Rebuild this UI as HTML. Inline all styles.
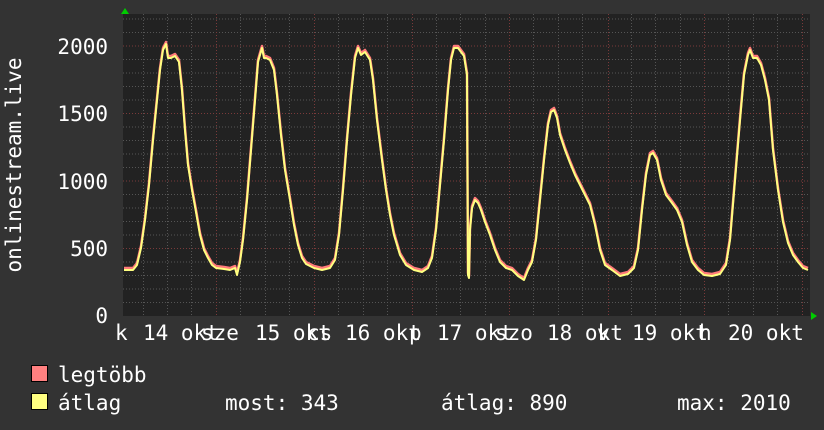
<!DOCTYPE html>
<html><head><meta charset="utf-8"><style>
html,body{margin:0;padding:0;background:#333;width:824px;height:430px;overflow:hidden}
svg{display:block}
text{font-family:"DejaVu Sans Mono","Liberation Mono",monospace;fill:#fff}
</style></head><body>
<svg width="824" height="430" viewBox="0 0 824 430">
<rect x="0" y="0" width="824" height="430" fill="#333"/>
<rect x="123" y="14" width="687" height="302" fill="#222"/>
<g stroke="#555" stroke-width="1" stroke-dasharray="1,2">
<path d="M123 302.5H810M123 289H810M123 275.5H810M123 262H810M123 235H810M123 221.5H810M123 208H810M123 194.5H810M123 167.5H810M123 154H810M123 140.5H810M123 127H810M123 100H810M123 86.5H810M123 73H810M123 59.5H810M123 32.5H810M123 19H810"/>
<path d="M143.5 14V316M167.5 14V316M191.5 14V316M240.5 14V316M265.5 14V316M289.5 14V316M338.5 14V316M363.5 14V316M387.5 14V316M436.5 14V316M460.5 14V316M485.5 14V316M533.5 14V316M558.5 14V316M582.5 14V316M631.5 14V316M655.5 14V316M680.5 14V316M728.5 14V316M753.5 14V316M777.5 14V316"/>
</g>
<g stroke="#7a3a3a" stroke-width="1" stroke-dasharray="1,2">
<path d="M123 248.5H810M123 181H810M123 113.5H810M123 46H810"/>
<path d="M216.5 14V316M314.5 14V316M412.5 14V316M509.5 14V316M608.5 14V316M704.5 14V316M802.5 14V316"/>
</g>
<polygon points="121,14 129,14 125,8" fill="#0c0"/>
<polygon points="811,312 811,320 817,316" fill="#0c0"/>
<g fill="none" stroke-linejoin="round">
<polyline id="c" stroke="#ff7a7a" stroke-width="2.5" transform="translate(0,-2)" points="124,270 133,270 137,265 141,248 145,220 149,185 153,140 157,100 160,70 163,50 166,44 168,58 171,58 175,56 179,62 182,90 185,130 188,165 192,190 196,212 200,235 204,250 208,258 212,265 216,268 224,269 230,270 235,268 237,275 240,262 243,240 247,200 251,150 255,100 258,62 262,48 264,58 266,58 270,60 274,70 277,95 281,135 285,170 290,200 294,225 298,245 302,258 306,264 314,268 322,270 330,268 335,260 339,235 343,190 347,140 351,95 355,58 358,48 361,55 365,52 370,60 373,80 377,120 382,160 386,190 390,215 394,235 400,255 406,265 414,270 422,272 428,268 432,258 436,230 440,185 444,140 448,90 451,60 454,48 458,48 461,52 464,56 467,75 468,275 469,278 470,230 472,208 475,200 478,203 481,210 485,222 490,235 495,250 500,262 506,268 512,270 518,276 524,280 528,270 532,262 536,240 540,200 544,160 548,125 551,112 554,110 557,118 560,135 565,150 570,163 575,175 580,185 585,195 590,205 595,225 600,250 605,265 612,270 620,276 628,274 634,268 638,250 642,210 646,175 650,155 653,153 657,160 661,180 666,195 672,203 677,210 682,222 687,245 692,262 698,270 704,275 712,276 720,274 726,265 730,240 735,180 740,120 744,75 748,55 750,50 753,58 757,58 761,65 765,80 769,100 773,150 778,190 783,222 788,243 793,255 798,262 803,268 808,270"/>
</g>
<polyline fill="none" stroke="#ffff80" stroke-width="2" stroke-linejoin="round" points="124,270 133,270 137,265 141,248 145,220 149,185 153,140 157,100 160,70 163,50 166,44 168,58 171,58 175,56 179,62 182,90 185,130 188,165 192,190 196,212 200,235 204,250 208,258 212,265 216,268 224,269 230,270 235,268 237,275 240,262 243,240 247,200 251,150 255,100 258,62 262,48 264,58 266,58 270,60 274,70 277,95 281,135 285,170 290,200 294,225 298,245 302,258 306,264 314,268 322,270 330,268 335,260 339,235 343,190 347,140 351,95 355,58 358,48 361,55 365,52 370,60 373,80 377,120 382,160 386,190 390,215 394,235 400,255 406,265 414,270 422,272 428,268 432,258 436,230 440,185 444,140 448,90 451,60 454,48 458,48 461,52 464,56 467,75 468,275 469,278 470,230 472,208 475,200 478,203 481,210 485,222 490,235 495,250 500,262 506,268 512,270 518,276 524,280 528,270 532,262 536,240 540,200 544,160 548,125 551,112 554,110 557,118 560,135 565,150 570,163 575,175 580,185 585,195 590,205 595,225 600,250 605,265 612,270 620,276 628,274 634,268 638,250 642,210 646,175 650,155 653,153 657,160 661,180 666,195 672,203 677,210 682,222 687,245 692,262 698,270 704,275 712,276 720,274 726,265 730,240 735,180 740,120 744,75 748,55 750,50 753,58 757,58 761,65 765,80 769,100 773,150 778,190 783,222 788,243 793,255 798,262 803,268 808,270"/>
<g font-size="21" text-anchor="end">
<text x="108" y="54">2000</text>
<text x="108" y="121">1500</text>
<text x="108" y="189">1000</text>
<text x="108" y="256">500</text>
<text x="108" y="323">0</text>
</g>
<text font-size="21" transform="translate(21,165) rotate(-90)" text-anchor="middle">onlinestream.live</text>
<g font-size="21">
<text x="115" y="340">k</text>
<text x="143" y="340">14 okt</text>
<text x="201" y="340">sze</text>
<text x="255" y="340">15 okt</text>
<text x="307" y="340">cs</text>
<text x="345" y="340">16 okt</text>
<text x="409" y="340">p</text>
<text x="437" y="340">17 okt</text>
<text x="495" y="340">szo</text>
<text x="547" y="340">18 okt</text>
<text x="597" y="340">v</text>
<text x="632" y="340">19 okt</text>
<text x="699" y="340">h</text>
<text x="728" y="340">20 okt</text>
</g>
<rect x="31.5" y="365.5" width="16" height="16" fill="#ff8080" stroke="#000"/>
<rect x="31.5" y="393.5" width="16" height="16" fill="#ffff80" stroke="#000"/>
<g font-size="21">
<text x="58" y="382">legtöbb</text>
<text x="58" y="410">átlag</text>
<text x="225" y="410">most: 343</text>
<text x="441" y="410">átlag: 890</text>
<text x="677" y="410">max: 2010</text>
</g>
</svg>
</body></html>
